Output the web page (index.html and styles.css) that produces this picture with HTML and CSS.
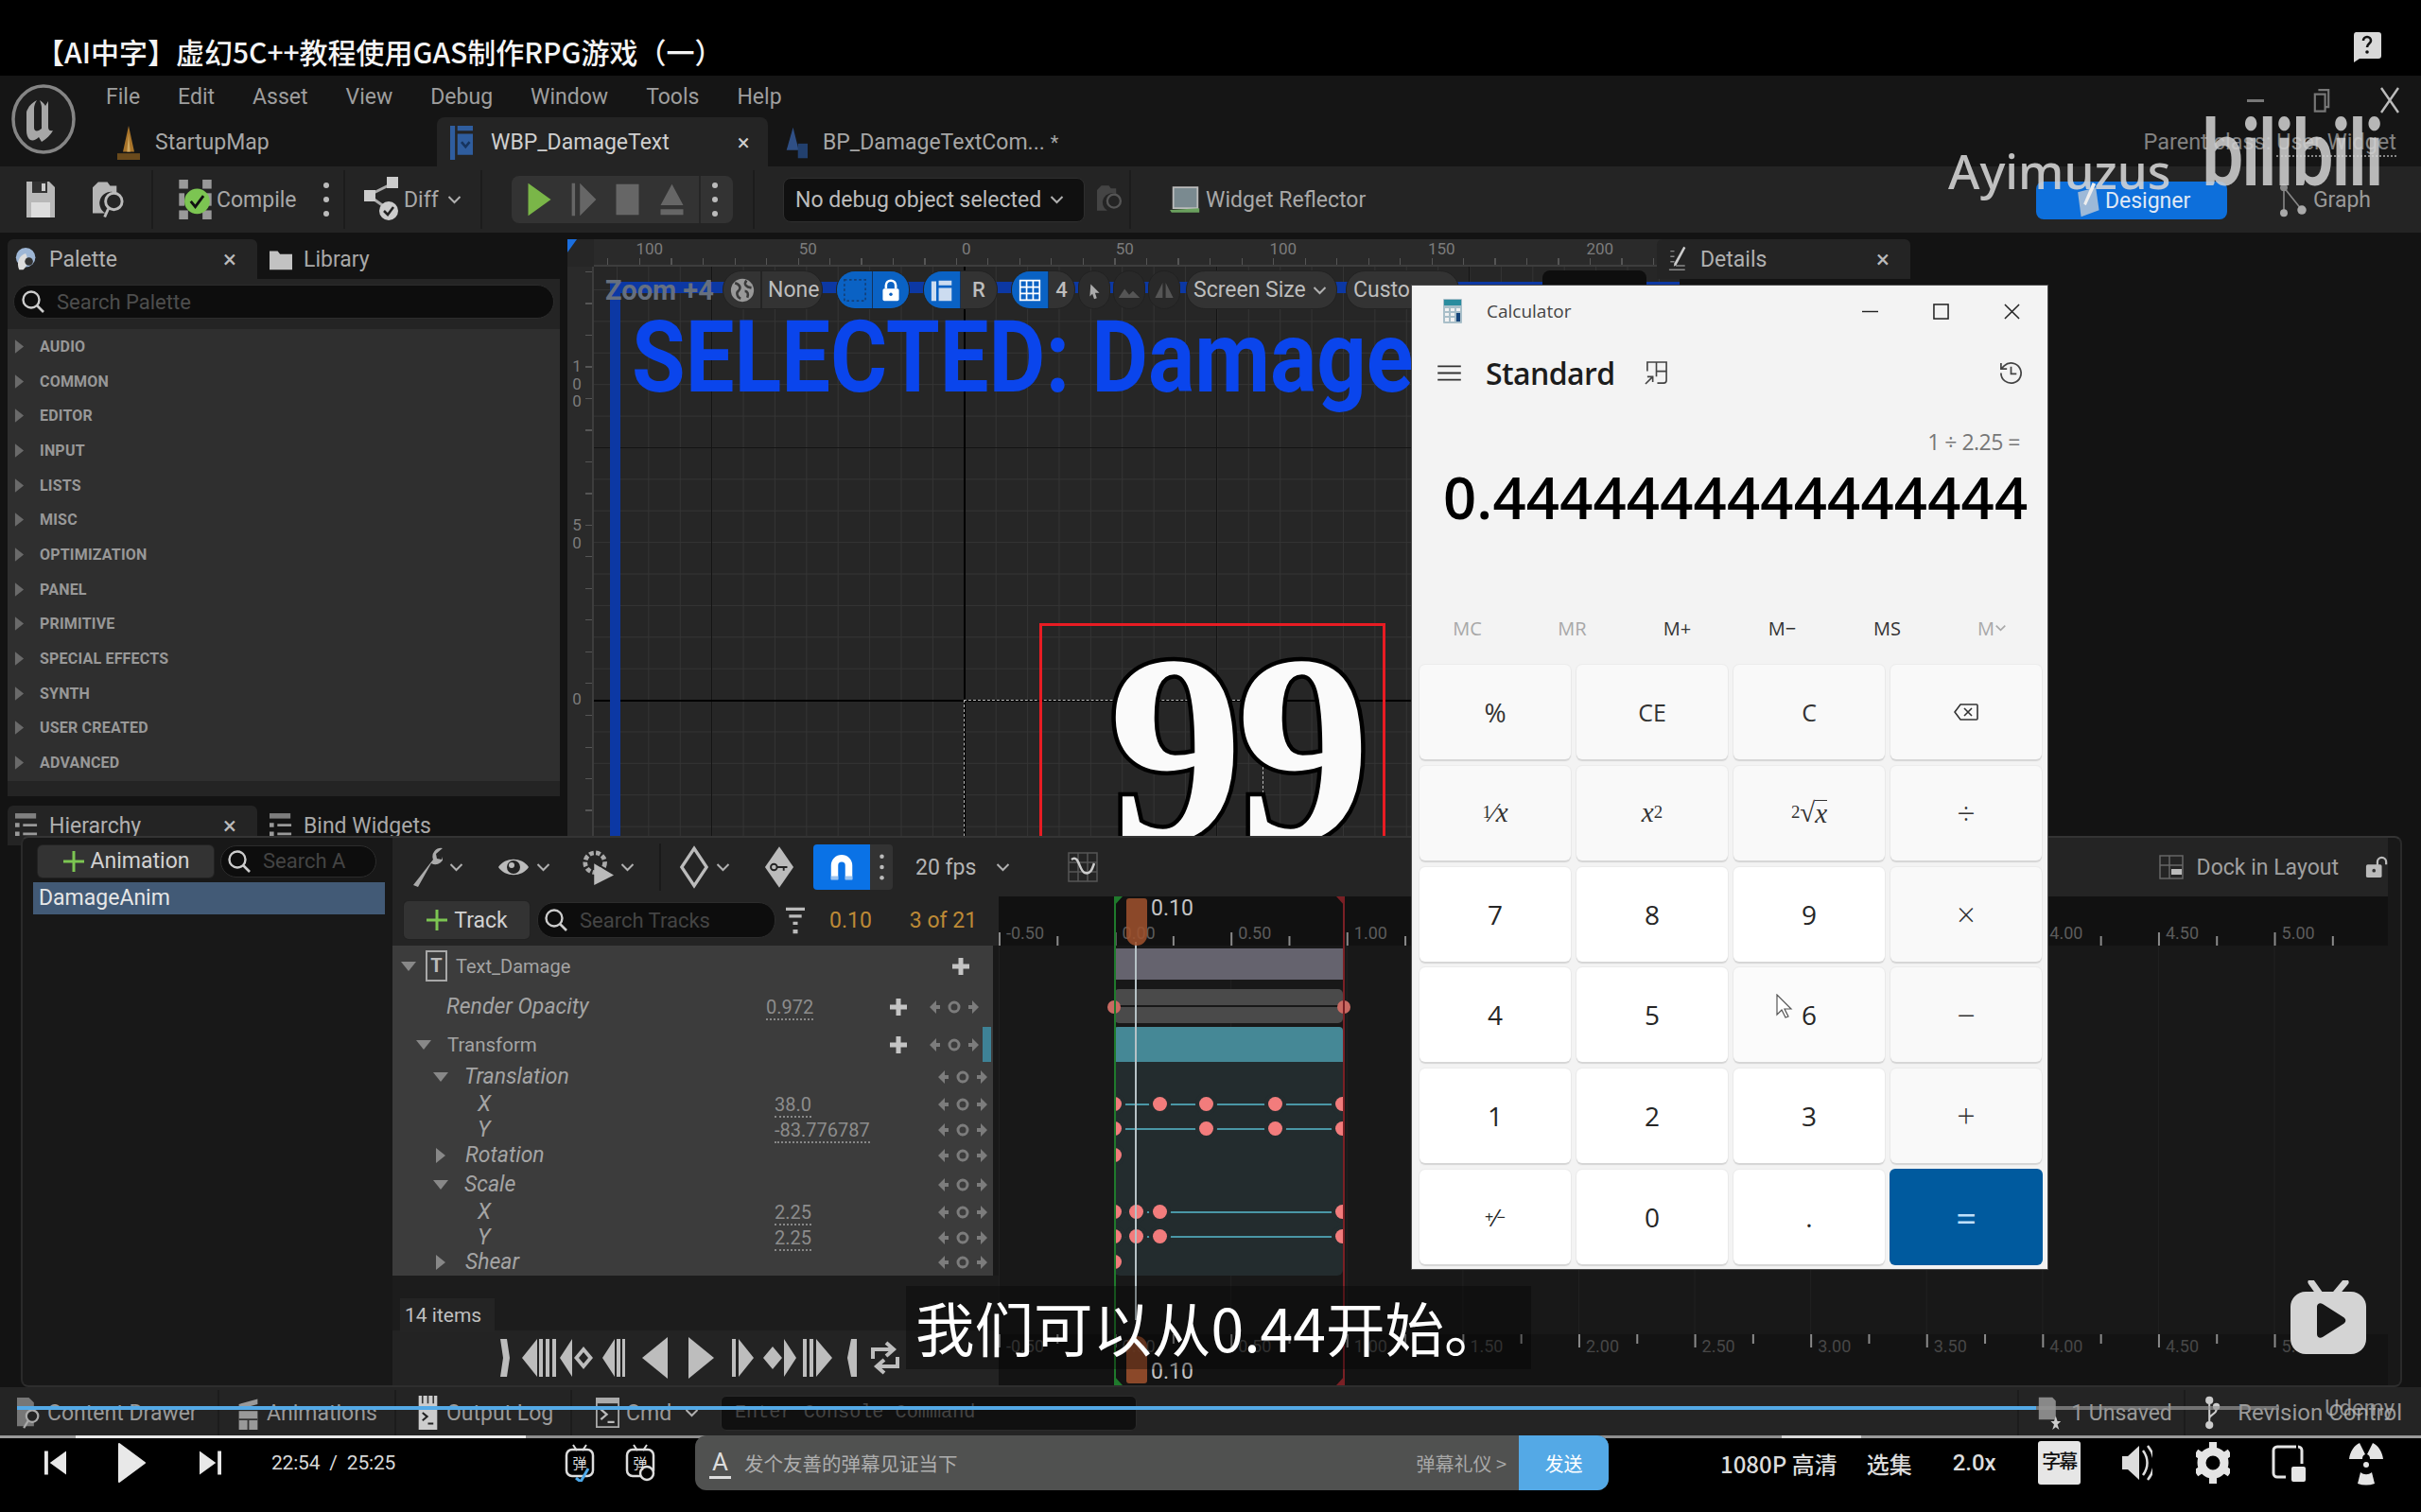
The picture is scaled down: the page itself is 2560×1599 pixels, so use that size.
FILE: index.html
```html
<!DOCTYPE html>
<html lang="zh">
<head>
<meta charset="utf-8">
<title>虚幻5C++教程</title>
<link rel="stylesheet" href="styles.css">
</head>
<body>
<svg class="defs" aria-hidden="true">
  <defs>
    <symbol id="chev" viewBox="0 0 16 10"><path d="M2 2l6 6 6-6" fill="none" stroke="currentColor" stroke-width="2"/></symbol>
    <symbol id="mag" viewBox="0 0 26 26"><circle cx="11" cy="11" r="8.5" fill="none" stroke="currentColor" stroke-width="2.4"/><path d="M17 17l7 7" stroke="currentColor" stroke-width="2.6"/></symbol>
    <symbol id="plus" viewBox="0 0 24 24"><path d="M12 1v22M1 12h22" stroke="currentColor" stroke-width="3"/></symbol>
    <symbol id="bplus" viewBox="0 0 20 20"><path d="M10 1v18M1 10h18" stroke="currentColor" stroke-width="5"/></symbol>
    <symbol id="dots" viewBox="0 0 8 40"><circle cx="4" cy="5" r="3" fill="currentColor"/><circle cx="4" cy="20" r="3" fill="currentColor"/><circle cx="4" cy="35" r="3" fill="currentColor"/></symbol>
    <symbol id="tri-r" viewBox="0 0 12 16"><path d="M1 0l10 8-10 8z" fill="currentColor"/></symbol>
    <symbol id="tri-d" viewBox="0 0 16 12"><path d="M0 1h16l-8 10z" fill="currentColor"/></symbol>
    <symbol id="keyarrows" viewBox="0 0 54 16"><path d="M8 1L1 8l7 7V10h4V6H8zM46 1l7 7-7 7V10h-4V6h4z" fill="currentColor"/><circle cx="27" cy="8" r="5" fill="none" stroke="currentColor" stroke-width="3"/></symbol>
    <symbol id="list" viewBox="0 0 26 28"><path d="M0 0h24v6H0z" fill="currentColor" opacity=".8"/><path d="M0 11h5v5H0zM0 21h5v5H0zM9 12h16v3H9zM9 22h16v3H9z" fill="currentColor"/></symbol>
  </defs>
</svg>

<div class="app">
  <header class="titlebar">
    <h1 class="title">【AI中字】虚幻5C++教程使用GAS制作RPG游戏（一）</h1>
    <svg class="help" viewBox="0 0 30 32"><path d="M3 0h24a3 3 0 013 3v22a3 3 0 01-3 3H7l-6 4V3a3 3 0 012-3z" fill="#d9d9d9"/><path d="M11 9a4 4 0 118 0c0 3-4 3-4 7" fill="none" stroke="#111" stroke-width="2.6"/><circle cx="15" cy="21" r="1.8" fill="#111"/></svg>
  </header>

  <div class="editor">
    <div class="head">
      <div class="logo-cell">
        <svg class="ue-logo" viewBox="0 0 70 74"><ellipse cx="35" cy="37" rx="32" ry="35" fill="#1e1e1e" stroke="#858585" stroke-width="3.5"/><path d="M18 27c2-5 6-8 10-10-2 3-3 6-3 9v20c0 3 2 4 5 3l3-2V25c0-3-1-5-2-8 3 2 5 4 6 6l3-5v27c0 3 1 5 5 4-2 4-7 9-12 12l-3-5c-3 3-6 4-9 3-3-2-4-6-4-10V31c0-1 0-3 1-4z" fill="#a6a6a6"/></svg>
      </div>
      <div class="head-rows">
        <div class="menu">
          <span>File</span><span>Edit</span><span>Asset</span><span>View</span><span>Debug</span><span>Window</span><span>Tools</span><span>Help</span>
          <div class="winctl">
            <svg viewBox="0 0 18 4" class="wc-min"><rect width="18" height="3" y="1" fill="#777"/></svg>
            <svg viewBox="0 0 20 28" class="wc-res"><path d="M6 2h12v20h-4M2 7h12v20H2z" fill="none" stroke="#777" stroke-width="2.4"/></svg>
            <svg viewBox="0 0 22 28" class="wc-x"><path d="M2 1l18 26M20 1L2 27" stroke="#bbb" stroke-width="2.4"/></svg>
          </div>
        </div>
        <div class="tabs">
          <div class="tab tab-map">
            <svg viewBox="0 0 28 42" class="tab-ico"><path d="M14 0l7 32H7z" fill="#a8742a"/><path d="M0 34h28v8H0z" fill="#6a4a1c"/><path d="M14 10l2 22h-4z" fill="#d0a860"/></svg>
            <span>StartupMap</span>
          </div>
          <div class="tab tab-active">
            <svg viewBox="0 0 28 42" class="tab-ico"><path d="M0 0h6v42H0zM9 0h19v6H9zM9 10h19v26H9z" fill="#2f5d9e"/><path d="M14 20l5 6 5-6" fill="none" stroke="#16345e" stroke-width="3"/></svg>
            <span>WBP_DamageText</span>
            <span class="tab-x">×</span>
          </div>
          <div class="tab tab-bp">
            <svg viewBox="0 0 28 42" class="tab-ico"><path d="M10 2l7 28H2z" fill="#2f4f85"/><path d="M16 22h12v18H16z" fill="#22406e"/></svg>
            <span>BP_DamageTextCom...</span><span class="tab-star">*</span>
          </div>
          <div class="parent">Parent class: <span class="dotted">User Widget</span></div>
        </div>
      </div>
    </div>

    <div class="toolbar">
      <div class="tb g1">
        <svg class="i30" viewBox="0 0 30 38"><path d="M0 0h24l6 6v32H0z" fill="#b8b8b8"/><path d="M6 0h16v12H6z" fill="#333"/><path d="M16 2h4v8h-4z" fill="#ccc"/><path d="M5 22h20v16H5z" fill="#ddd"/></svg>
        <svg class="i35" viewBox="0 0 36 42"><path d="M0 8l6-6h10l3 4h7v8a12 12 0 00-12 22H0z" fill="#b5b5b5"/><circle cx="23" cy="23" r="9" fill="none" stroke="#bbb" stroke-width="3"/><path d="M17 31l-4 9" stroke="#bbb" stroke-width="3"/></svg>
      </div>
      <div class="tb g2">
        <svg class="i35" viewBox="0 0 36 44"><g fill="#999"><rect x="0" width="10" height="10"/><rect x="26" width="10" height="10"/><rect x="0" y="34" width="10" height="10"/><rect x="26" y="34" width="10" height="10"/><rect y="15" width="6" height="14"/><rect x="30" y="15" width="6" height="14"/></g><circle cx="20" cy="24" r="14" fill="#7cc552"/><path d="M13 24l5 6 9-12" fill="none" stroke="#111" stroke-width="3"/></svg>
        <span>Compile</span>
        <svg class="dots" ><use href="#dots"/></svg>
      </div>
      <div class="tb g3">
        <svg class="i40" viewBox="0 0 40 48"><path d="M8 18L28 8M8 22l14 10" stroke="#aaa" stroke-width="3"/><rect y="14" width="12" height="12" fill="#ccc"/><rect x="24" width="12" height="12" fill="#ccc"/><circle cx="26" cy="36" r="10" fill="#ccc"/><path d="M21 36l4 4 6-8" fill="none" stroke="#222" stroke-width="2.5"/></svg>
        <span>Diff</span>
        <svg class="chev"><use href="#chev"/></svg>
      </div>
      <div class="tb g4">
        <div class="play-pill">
          <svg class="pp" viewBox="0 0 30 42"><path d="M1 1l28 20L1 41z" fill="#7ab648"/></svg>
          <svg class="pp" viewBox="0 0 30 42"><path d="M0 1h4v40H0zM10 1l20 20-20 20z" fill="#666"/></svg>
          <svg class="pp" viewBox="0 0 30 42"><rect x="1" y="2" width="28" height="38" fill="#666"/></svg>
          <svg class="pp" viewBox="0 0 30 42"><path d="M15 2l14 26H1zM1 33h28v7H1z" fill="#666"/></svg>
          <span class="pp-sep"></span>
          <svg class="dots"><use href="#dots"/></svg>
        </div>
      </div>
      <div class="tb g5">
        <div class="debug-select"><span>No debug object selected</span><svg class="chev"><use href="#chev"/></svg></div>
        <svg class="i28" viewBox="0 0 36 42"><path d="M0 8l6-6h10l3 4h7v8a12 12 0 00-12 22H0z" fill="#444"/><circle cx="23" cy="23" r="9" fill="none" stroke="#555" stroke-width="3"/></svg>
      </div>
      <div class="tb g6">
        <svg class="i33" viewBox="0 0 36 32"><path d="M4 2h28v24H4z" fill="#7a8a90" stroke="#bbb" stroke-width="2"/><path d="M0 28l34-2v5H2z" fill="#6aa05e"/></svg>
        <span>Widget Reflector</span>
      </div>
      <div class="tb-right">
        <div class="designer">
          <svg class="i33" viewBox="0 0 36 44"><path d="M6 12l22-6 4 28-22 8z" fill="#9db9d8"/><path d="M24 0l4 2-12 26-3-2z" fill="#eee"/></svg>
          <span>Designer</span>
        </div>
        <div class="graph">
          <svg class="i33" viewBox="0 0 36 48"><path d="M6 8l24 30M6 8v34" stroke="#888" stroke-width="2"/><circle cx="6" cy="8" r="5" fill="#888"/><circle cx="30" cy="38" r="6" fill="#aaa"/><circle cx="6" cy="42" r="5" fill="#aaa"/></svg>
          <span>Graph</span>
        </div>
      </div>
    </div>

    <div class="workspace">
      <div class="left-col">
        <div class="dock-tabs">
          <div class="dock-tab">
            <svg class="tab-ico24" viewBox="0 0 28 30"><circle cx="13" cy="13" r="12" fill="#9eb7d6"/><path d="M5 28c-4-8 0-18 8-20 4 8 2 16-3 20z" fill="#ddd"/><circle cx="17" cy="18" r="5" fill="#333"/></svg>
            <span>Palette</span><span class="dock-x">×</span>
          </div>
          <div class="dock-link">
            <svg class="tab-ico24" viewBox="0 0 28 26"><path d="M0 3h10l3 4h15v19H0z" fill="#c2c2c2"/></svg>
            <span>Library</span>
          </div>
        </div>
        <div class="panel">
          <div class="search-row">
            <div class="search">
              <svg class="mag"><use href="#mag"/></svg><span>Search Palette</span>
            </div>
          </div>
          <ul class="cat-list">
            <li><svg class="caret"><use href="#tri-r"/></svg>AUDIO</li>
            <li><svg class="caret"><use href="#tri-r"/></svg>COMMON</li>
            <li><svg class="caret"><use href="#tri-r"/></svg>EDITOR</li>
            <li><svg class="caret"><use href="#tri-r"/></svg>INPUT</li>
            <li><svg class="caret"><use href="#tri-r"/></svg>LISTS</li>
            <li><svg class="caret"><use href="#tri-r"/></svg>MISC</li>
            <li><svg class="caret"><use href="#tri-r"/></svg>OPTIMIZATION</li>
            <li><svg class="caret"><use href="#tri-r"/></svg>PANEL</li>
            <li><svg class="caret"><use href="#tri-r"/></svg>PRIMITIVE</li>
            <li><svg class="caret"><use href="#tri-r"/></svg>SPECIAL EFFECTS</li>
            <li><svg class="caret"><use href="#tri-r"/></svg>SYNTH</li>
            <li><svg class="caret"><use href="#tri-r"/></svg>USER CREATED</li>
            <li><svg class="caret"><use href="#tri-r"/></svg>ADVANCED</li>
          </ul>
        </div>
        <div class="dock-tabs dock-lower">
          <div class="dock-tab">
            <svg class="tab-ico24"><use href="#list"/></svg>
            <span>Hierarchy</span><span class="dock-x">×</span>
          </div>
          <div class="dock-link">
            <svg class="tab-ico24"><use href="#list"/></svg>
            <span>Bind Widgets</span>
          </div>
        </div>
      </div>

      <div class="designer-view">
        <div class="corner"></div>
        <div class="ruler-top">
          <span>100</span><span>50</span><span>0</span><span>50</span><span>100</span><span>150</span><span>200</span>
        </div>
        <div class="ruler-left">
          <span class="rl-100">1<br>0<br>0</span>
          <span class="rl-50">5<br>0</span>
          <span class="rl-0">0</span>
        </div>
        <div class="canvas">
          <div class="outline-h"></div>
          <div class="outline-v"></div>
          <div class="selected">SELECTED: Damage</div>
          <div class="dash"></div>
          <div class="nines">99</div>
          <div class="redbox"></div>
          <div class="cv-bar">
            <span class="zoom-txt">Zoom +4</span>
            <div class="pill pill-none">
              <svg class="globe" viewBox="0 0 30 30"><circle cx="15" cy="15" r="14" fill="#999"/><path d="M6 6c6 2 8 6 4 10-3 2-1 8 3 9M20 3c-4 5 0 8 6 9M18 16c3 0 5 3 3 8" fill="none" stroke="#3a3a3a" stroke-width="3"/></svg>
              <span class="pill-div"></span><span>None</span>
            </div>
            <div class="pill pill-select">
              <span class="blue-seg seg-wide"><svg class="sq" viewBox="0 0 28 28"><rect x="1" y="1" width="26" height="26" fill="none" stroke="#13407a" stroke-width="2" stroke-dasharray="3 3"/></svg></span>
              <span class="blue-seg seg-lock"><svg class="sq" viewBox="0 0 24 28"><path d="M6 12V8a6 6 0 0112 0v4" fill="none" stroke="#fff" stroke-width="3"/><rect x="2" y="12" width="20" height="15" rx="2" fill="#fff"/><circle cx="12" cy="19" r="2" fill="#0a5fc0"/></svg></span>
            </div>
            <div class="pill pill-r">
              <span class="blue-seg seg-wide"><svg class="sq" viewBox="0 0 28 28"><path d="M1 3h6v24H1zM10 2h16v6H10zM10 11h16v16H10z" fill="#ccdcf0"/></svg></span>
              <span class="pill-lbl">R</span>
            </div>
            <div class="pill pill-grid">
              <span class="blue-seg seg-wide"><svg class="sq" viewBox="0 0 28 28"><path d="M2 2h24v24H2zM10 2v24M18 2v24M2 10h24M2 18h24" fill="none" stroke="#fff" stroke-width="2"/></svg></span>
              <span class="pill-lbl">4</span>
            </div>
            <div class="pill pill-ic"><svg class="sq" viewBox="0 0 20 26"><path d="M6 6l10 10h-5l2 6-3 1-2-6-3 3z" fill="#aaa"/></svg></div>
            <div class="pill pill-ic pill-dim"><svg class="sq" viewBox="0 0 30 24"><path d="M1 2h28v20H1z" fill="none"/><path d="M1 22l8-12 6 8 5-5 9 9z" fill="#555"/></svg></div>
            <div class="pill pill-ic pill-dim"><svg class="sq" viewBox="0 0 30 24"><path d="M13 2L3 22h10zM17 2l10 20H17z" fill="#555"/></svg></div>
            <div class="pill pill-size"><span>Screen Size</span><svg class="chev"><use href="#chev"/></svg></div>
            <div class="pill pill-custom"><span>Custom</span></div>
            <div class="width-box"></div>
          </div>
        </div>
      </div>

      <div class="right-col">
        <div class="dock-tab details-tab">
          <svg class="tab-ico24" viewBox="0 0 26 40"><path d="M2 8h6M2 16h6M2 24h6M0 36h24M10 30h14" stroke="#888" stroke-width="2"/><path d="M22 1l3 2-14 26-4 2 1-5z" fill="#ccc"/></svg>
          <span>Details</span><span class="dock-x">×</span>
        </div>
        <div class="details-body"></div>
      </div>

      <!-- docked animation drawer, lies over the workspace -->
      <section class="drawer">
        <div class="anim-list">
          <div class="anim-top">
            <button class="ue-btn btn-anim"><svg class="plus"><use href="#plus"/></svg><span>Animation</span></button>
            <div class="search search-a"><svg class="mag"><use href="#mag"/></svg><span>Search A</span></div>
          </div>
          <div class="anim-row">DamageAnim</div>
        </div>
        <div class="seq">
          <div class="seq-bar">
            <svg class="ic-wrench" viewBox="0 0 34 44"><path d="M3 41L24 14a9 9 0 0110-12l-7 6 1 5 5 1 2-6a9 9 0 01-13 10L8 43z" fill="#aaa"/></svg>
            <svg class="chev"><use href="#chev"/></svg>
            <svg class="ic-eye" viewBox="0 0 34 24"><path d="M1 12C8 1 26 1 33 12 26 23 8 23 1 12z" fill="#bbb"/><circle cx="17" cy="12" r="7" fill="#222"/><circle cx="15" cy="10" r="3" fill="#bbb"/></svg>
            <svg class="chev"><use href="#chev"/></svg>
            <svg class="ic-gear" viewBox="0 0 36 40"><circle cx="15" cy="15" r="11" fill="none" stroke="#aaa" stroke-width="5" stroke-dasharray="5 2.5"/><path d="M14 16l22 13-22 11z" fill="#bbb"/></svg>
            <svg class="chev"><use href="#chev"/></svg>
            <span class="seq-sep"></span>
            <svg class="ic-dia" viewBox="0 0 34 48"><path d="M17 3l14 21-14 21L3 24z" fill="none" stroke="#bbb" stroke-width="3.5"/></svg>
            <svg class="chev"><use href="#chev"/></svg>
            <svg class="ic-key" viewBox="0 0 34 48"><path d="M17 1l16 23-16 23L1 24z" fill="#bbb"/><circle cx="11" cy="24" r="3.5" fill="none" stroke="#222" stroke-width="2"/><path d="M14 24h12M22 24v4" stroke="#222" stroke-width="2"/></svg>
            <div class="magnet"><svg viewBox="0 0 32 36"><path d="M4 32V16a12 12 0 0124 0v16h-8V16a4 4 0 00-8 0v16z" fill="#fff"/><path d="M4 28h8v4H4zM20 28h8v4h-8z" fill="#9cc4f0"/></svg></div>
            <div class="magnet-more"><svg class="dots"><use href="#dots"/></svg></div>
            <span class="fps">20 fps</span>
            <svg class="chev"><use href="#chev"/></svg>
            <svg class="ic-curve" viewBox="0 0 32 32"><path d="M1 1h30v30H1zM1 11h30M1 21h30M11 1v30M21 1v30" fill="none" stroke="#555" stroke-width="1.5"/><path d="M4 8c8-6 8 12 14 14s8-4 10-10" fill="none" stroke="#ccc" stroke-width="2.5"/></svg>
            <div class="dock-layout">
              <svg class="ic-dock" viewBox="0 0 26 26"><path d="M1 1h24v24H1zM1 11h24M11 1v24" fill="none" stroke="#666" stroke-width="1.5"/><rect x="13" y="15" width="11" height="6" fill="#bbb"/></svg>
              <span>Dock in Layout</span>
              <svg class="ic-lock" viewBox="0 0 26 26"><path d="M14 11V7a5 5 0 0110 0v3" fill="none" stroke="#bbb" stroke-width="2.4"/><rect x="1" y="10" width="18" height="15" rx="2" fill="#bbb"/><circle cx="10" cy="17" r="2" fill="#333"/></svg>
            </div>
          </div>
          <div class="seq-main">
            <div class="tree-col">
              <div class="track-bar">
                <button class="ue-btn btn-track"><svg class="plus"><use href="#plus"/></svg><span>Track</span></button>
                <div class="search search-t"><svg class="mag"><use href="#mag"/></svg><span>Search Tracks</span></div>
                <svg class="ic-filter" viewBox="0 0 24 36"><path d="M0 2h24v4H0zM4 11h16v4H4zM9 20h6v4H9zM9 30h6v5H9z" fill="#bbb"/></svg>
                <span class="orange val1">0.10</span><span class="orange val2">3 of 21</span>
              </div>
              <div class="tree">
                <div class="trow h43 top"><div class="tn l0"><svg class="cd"><use href="#tri-d"/></svg><span class="t-ico">T</span><span class="name-sm">Text_Damage</span></div><div></div><div class="ta pad14"><svg class="bplus bp-top"><use href="#bplus"/></svg></div></div>
                <div class="trow h43"><div class="tn l1 it">Render Opacity</div><div class="tval"><span class="dotted">0.972</span></div><div class="ta pad14"><svg class="bplus"><use href="#bplus"/></svg><svg class="ka"><use href="#keyarrows"/></svg></div></div>
                <div class="trow h37"><div class="tn l1x"><svg class="cd"><use href="#tri-d"/></svg><span class="name-md">Transform</span></div><div></div><div class="ta pad14"><svg class="bplus"><use href="#bplus"/></svg><svg class="ka"><use href="#keyarrows"/></svg></div></div>
                <div class="trow h31"><div class="tn l2 it"><svg class="cd"><use href="#tri-d"/></svg>Translation</div><div></div><div class="ta"><svg class="ka"><use href="#keyarrows"/></svg></div></div>
                <div class="trow h27"><div class="tn l3 it">X</div><div class="tval tval2"><span class="dotted">38.0</span></div><div class="ta"><svg class="ka"><use href="#keyarrows"/></svg></div></div>
                <div class="trow h25"><div class="tn l3 it">Y</div><div class="tval tval2"><span class="dotted">-83.776787</span></div><div class="ta"><svg class="ka"><use href="#keyarrows"/></svg></div></div>
                <div class="trow h31"><div class="tn l2 it"><svg class="cr"><use href="#tri-r"/></svg>Rotation</div><div></div><div class="ta"><svg class="ka"><use href="#keyarrows"/></svg></div></div>
                <div class="trow h31"><div class="tn l2 it"><svg class="cd"><use href="#tri-d"/></svg>Scale</div><div></div><div class="ta"><svg class="ka"><use href="#keyarrows"/></svg></div></div>
                <div class="trow h27"><div class="tn l3 it">X</div><div class="tval tval2"><span class="dotted">2.25</span></div><div class="ta"><svg class="ka"><use href="#keyarrows"/></svg></div></div>
                <div class="trow h25"><div class="tn l3 it">Y</div><div class="tval tval2"><span class="dotted">2.25</span></div><div class="ta"><svg class="ka"><use href="#keyarrows"/></svg></div></div>
                <div class="trow h29"><div class="tn l2 it"><svg class="cr"><use href="#tri-r"/></svg>Shear</div><div></div><div class="ta"><svg class="ka"><use href="#keyarrows"/></svg></div></div>
                <span class="teal-mark"></span>
              </div>
              <div class="tree-foot">
                <span class="items">14 items</span>
                <svg class="transport" viewBox="0 0 430 50">
                  <g fill="#bdbdbd">
                    <path d="M0 5h7l3 20-3 20H0l3-20z"/>
                    <path d="M23 25l16-20v40zM41 5h4v40h-4zM48 5h4v40h-4zM55 5h4v40h-4z"/>
                    <path d="M63 25l13-20v40zM88 13l10 12-10 12-10-12zM88 19l-5 6 5 6 5-6z"/>
                    <path d="M108 25l13-20v40zM123 5h4v40h-4zM129 5h3v40h-3z"/>
                    <path d="M150 25l27-22v44z"/>
                    <path d="M199 3l27 22-27 22z"/>
                    <path d="M245 5h4v40h-4zM252 5l16 20-16 20z"/>
                    <path d="M288 13l10 12-10 12-10-12zM300 5l13 20-13 20z"/>
                    <path d="M320 5h4v40h-4zM327 5h4v40h-4zM334 5l17 20-17 20z"/>
                    <path d="M367 25l4-20h6v40h-6z"/>
                  </g>
                  <path d="M394 26V16h20m-6-7l8 7-8 7M420 24v10h-20m6 7l-8-7 8-7" fill="none" stroke="#bdbdbd" stroke-width="4"/>
                </svg>
              </div>
            </div>
            <div class="timeline">
              <div class="tl-ruler">
                <span>-0.50</span><span>0.00</span><span>0.50</span><span>1.00</span><span>1.50</span><span>2.00</span><span>2.50</span><span>3.00</span><span>3.50</span><span>4.00</span><span>4.50</span><span>5.00</span>
              </div>
              <div class="tl-tracks">
                <div class="clip-row h43"><div class="clip clip-purple"></div></div>
                <div class="clip-row h43">
                  <div class="clip clip-grey"></div>
                  <i class="key key-out key-l"></i><i class="key key-out key-r"></i>
                </div>
                <div class="clip-row h37"><div class="clip clip-teal"></div></div>
                <div class="teal-block">
                  <div class="kr h31"></div>
                  <div class="kr h27 line"><i class="key" style="left:0"></i><i class="key" style="left:48px"></i><i class="key" style="left:97px"></i><i class="key" style="left:170px"></i><i class="key" style="left:241px"></i></div>
                  <div class="kr h25 line"><i class="key" style="left:0"></i><i class="key" style="left:97px"></i><i class="key" style="left:170px"></i><i class="key" style="left:241px"></i></div>
                  <div class="kr h31"><i class="key" style="left:0"></i></div>
                  <div class="kr h31"></div>
                  <div class="kr h27 line"><i class="key" style="left:0"></i><i class="key" style="left:23px"></i><i class="key" style="left:48px"></i><i class="key" style="left:241px"></i></div>
                  <div class="kr h25 line"><i class="key" style="left:0"></i><i class="key" style="left:23px"></i><i class="key" style="left:48px"></i><i class="key" style="left:241px"></i></div>
                  <div class="kr h29"><i class="key" style="left:0"></i></div>
                </div>
              </div>
              <div class="tl-ruler tl-ruler-b">
                <span>-0.50</span><span>0.00</span><span>0.50</span><span>1.00</span><span>1.50</span><span>2.00</span><span>2.50</span><span>3.00</span><span>3.50</span><span>4.00</span><span>4.50</span><span>5.00</span>
              </div>
              <i class="range range-start"></i>
              <i class="range range-end"></i>
              <i class="playline"></i>
              <span class="head-top"></span><span class="head-lbl lbl-top">0.10</span>
              <span class="head-bot"></span><span class="head-lbl lbl-bot">0.10</span>
            </div>
          </div>
        </div>
      </section>
    </div>

    <div class="status">
      <div class="st st1"><svg class="st-ico" viewBox="0 0 28 40"><path d="M0 2h14l6 6v28H0z" fill="#777"/><circle cx="18" cy="24" r="7" fill="#242424" stroke="#aaa" stroke-width="2.5"/><path d="M13 30l-5 8" stroke="#aaa" stroke-width="2.5"/></svg><span>Content Drawer</span></div>
      <div class="st st2"><svg class="st-ico" viewBox="0 0 26 40"><path d="M2 10L24 4v6L2 16z" fill="#999"/><path d="M2 18h22v22H2z" fill="#999"/><path d="M2 28h22M13 28v12" stroke="#333" stroke-width="2"/></svg><span>Animations</span></div>
      <div class="st st3"><svg class="st-ico" viewBox="0 0 24 44"><path d="M0 0h24v44H0z" fill="#ccc"/><path d="M5 0v10M12 0v10M19 0v10" stroke="#333" stroke-width="2"/><path d="M5 22l6 5-6 5M12 36h7" fill="none" stroke="#222" stroke-width="2.5"/></svg><span>Output Log</span></div>
      <div class="st st4"><svg class="st-ico" viewBox="0 0 28 36"><path d="M1 1h26v34H1z" fill="none" stroke="#aaa" stroke-width="2"/><path d="M1 1h26v6H1z" fill="#aaa"/><path d="M6 14l7 6-7 6M14 29h8" fill="none" stroke="#bbb" stroke-width="2.5"/></svg><span>Cmd</span><svg class="chev"><use href="#chev"/></svg></div>
      <div class="console"><span>Enter Console Command</span></div>
      <div class="st st-r1"><svg class="st-ico" viewBox="0 0 26 40"><path d="M0 2h16l4 4v22H0z" fill="#888"/><path d="M20 24l2 6h4l-4 4 2 6-4-3-4 3 2-6-4-4h4z" fill="#ccc"/></svg><span>1 Unsaved</span></div>
      <div class="st st-r2"><svg class="st-ico" viewBox="0 0 20 44"><circle cx="6" cy="6" r="5" fill="#ccc"/><circle cx="6" cy="38" r="5" fill="#ccc"/><circle cx="15" cy="14" r="4.5" fill="#ccc"/><path d="M6 10v24M15 18c0 6-9 6-9 12" fill="none" stroke="#ccc" stroke-width="2.5"/></svg><span>Revision Control</span></div>
    </div>
  </div>

  <div class="player">
    <div class="seekline"></div>
    <div class="player-row">
      <svg class="p-prev" viewBox="0 0 24 26"><path d="M0 0h4v26H0zM24 0v26L6 13z" fill="#e8e8e8"/></svg>
      <svg class="p-play" viewBox="0 0 30 42"><path d="M2 1l27 20L2 41z" fill="#e8e8e8" stroke="#e8e8e8" stroke-width="2" stroke-linejoin="round"/></svg>
      <svg class="p-next" viewBox="0 0 24 26"><path d="M24 0h-4v26h4zM0 0v26l18-13z" fill="#e8e8e8"/></svg>
      <span class="p-time">22:54&nbsp; /&nbsp; 25:25</span>
      <svg class="p-dm1" viewBox="0 0 32 40"><path d="M9 1l4 6M23 1l-4 6" stroke="#ddd" stroke-width="2"/><rect x="2" y="6" width="28" height="28" rx="6" fill="none" stroke="#ddd" stroke-width="2.5"/><path d="M12 36l5 4 8-14" fill="none" stroke="#4ea8e8" stroke-width="3"/></svg>
      <span class="dm-glyph dm-g1">弹</span>
      <svg class="p-dm2" viewBox="0 0 32 40"><path d="M9 1l4 6M23 1l-4 6" stroke="#ddd" stroke-width="2"/><rect x="2" y="6" width="28" height="28" rx="6" fill="none" stroke="#ddd" stroke-width="2.5"/><circle cx="23" cy="31" r="7" fill="#000" stroke="#ddd" stroke-width="2.5"/></svg>
      <span class="dm-glyph dm-g2">弹</span>
      <div class="dm-input">
        <span class="dm-a">A</span>
        <span class="dm-ph">发个友善的弹幕见证当下</span>
        <span class="dm-rule">弹幕礼仪 <b>&gt;</b></span>
        <button class="dm-send">发送</button>
      </div>
      <span class="p-txt q">1080P 高清</span>
      <span class="p-txt ep">选集</span>
      <span class="p-txt sp">2.0x</span>
      <span class="cc">字幕</span>
      <svg class="p-vol" viewBox="0 0 32 42"><path d="M0 14h6L18 3v36L6 28H0z" fill="#ddd"/><path d="M22 8c6 8 6 18 0 26M27 3c9 11 9 25 0 36" fill="none" stroke="#ddd" stroke-width="2.5"/></svg>
      <svg class="p-gear" viewBox="0 0 36 44"><circle cx="18" cy="22" r="12" fill="none" stroke="#e4e4e4" stroke-width="9"/><path d="M18 0v7M18 37v7M0 11l6 4M30 29l6 4M0 33l6-4M30 15l6-4" stroke="#e4e4e4" stroke-width="8"/></svg>
      <svg class="p-pip" viewBox="0 0 36 40"><path d="M26 3H6a4 4 0 00-4 4v24a4 4 0 004 4h9M32 21V7a4 4 0 00-4-4" fill="none" stroke="#e4e4e4" stroke-width="3"/><rect x="21" y="24" width="15" height="16" rx="2" fill="#e4e4e4"/></svg>
      <svg class="p-rad" viewBox="0 0 38 48"><path d="M12 3c-6 3-10 9-11 17h14c0-3 1-4 3-5zM26 3c6 3 10 9 11 17H23c0-3-1-4-3-5z" fill="#e4e4e4"/><circle cx="19" cy="26" r="3" fill="#e4e4e4"/><path d="M13 34c4 3 8 3 12 0l3 12c-6 2-12 2-18 0z" fill="#e4e4e4"/></svg>
    </div>
  </div>

  <!-- everything below lies over the video frame -->
  <div class="calc">
    <div class="calc-title">
      <svg class="calc-ico" viewBox="0 0 20 26"><rect width="20" height="26" rx="1" fill="#a9bfc9"/><rect x="1" y="1" width="18" height="6" fill="#2a8c9e"/><path d="M2 10h4v3H2zM8 10h4v3H8zM14 10h4v3h-4zM2 15h4v3H2zM8 15h4v3H8zM2 20h4v4H2zM8 20h4v4H8z" fill="#f2f2f2"/><rect x="14" y="15" width="4" height="9" fill="#17457a"/></svg>
      <span class="calc-name">Calculator</span>
      <div class="calc-ctl">
        <svg viewBox="0 0 18 18"><path d="M0 9h18" stroke="#222" stroke-width="1.5"/></svg>
        <svg viewBox="0 0 18 18"><rect x="1" y="1" width="16" height="16" fill="none" stroke="#222" stroke-width="1.6"/></svg>
        <svg viewBox="0 0 18 18"><path d="M1 1l16 16M17 1L1 17" stroke="#222" stroke-width="1.6"/></svg>
      </div>
    </div>
    <div class="calc-head">
      <svg class="burger" viewBox="0 0 26 18"><path d="M0 1.5h26M0 9h26M0 16.5h26" stroke="#333" stroke-width="2"/></svg>
      <span class="calc-mode">Standard</span>
      <svg class="keeptop" viewBox="0 0 26 26"><path d="M3 11V1h10v10h11V1H13M24 11v10a3 3 0 01-3 3h-7M13 11v6" fill="none" stroke="#444" stroke-width="1.7"/><path d="M1 25l8-8M3 17h6v6" fill="none" stroke="#444" stroke-width="1.7"/></svg>
      <svg class="history" viewBox="0 0 28 28"><path d="M3 14a11 11 0 103.5-8L3 9.5M3 3v6.5h6.5" fill="none" stroke="#444" stroke-width="1.8"/><path d="M14 7v8h6" fill="none" stroke="#444" stroke-width="1.8"/></svg>
    </div>
    <div class="calc-expr">1 ÷ 2.25 =</div>
    <div class="calc-val">0.4444444444444444</div>
    <div class="calc-mem">
      <span class="off">MC</span><span class="off">MR</span><span>M+</span><span>M−</span><span>MS</span><span class="off mv">M<svg class="mchev"><use href="#chev"/></svg></span>
    </div>
    <div class="keypad">
      <button class="fn">%</button><button class="fn sm">CE</button><button class="fn sm">C</button>
      <button class="fn"><svg class="bksp" viewBox="0 0 26 18"><path d="M7 1h17a1 1 0 011 1v14a1 1 0 01-1 1H7l-6-8z" fill="none" stroke="#333" stroke-width="1.6"/><path d="M11 5l8 8M19 5l-8 8" stroke="#333" stroke-width="1.6"/></svg></button>
      <button class="fn ser"><sup>1</sup>⁄<i>x</i></button><button class="fn ser"><i>x</i><sup>2</sup></button><button class="fn ser"><sup>2</sup>√<i class="ol">x</i></button><button class="fn op">÷</button>
      <button>7</button><button>8</button><button>9</button><button class="fn op">×</button>
      <button>4</button><button>5</button><button class="hov">6<svg class="cursor" viewBox="0 0 18 26"><path d="M1 1v21l5-5 4 8 3-1-4-8h7z" fill="#fff" stroke="#555" stroke-width="1.2"/></svg></button><button class="fn op">−</button>
      <button>1</button><button>2</button><button>3</button><button class="fn op">+</button>
      <button class="ser-s"><sup>+</sup>⁄<sub>−</sub></button><button>0</button><button>.</button><button class="eq">=</button>
    </div>
  </div>

  <div class="subtitle">我们可以从0.44开始。</div>
  <div class="wm-name">Ayimuzus</div>
  <div class="wm-bili">bilibili</div>
  <div class="wm-udemy">Udemy</div>
  <div class="progress"><i class="prog-fill"></i><i class="prog-buf"></i></div>
  <svg class="bili-tv" viewBox="0 0 80 78"><path d="M22 2l10 14M58 2L48 14" stroke="#d4d4d4" stroke-width="7" stroke-linecap="round"/><rect y="12" width="80" height="66" rx="16" fill="#d4d4d4"/><path d="M28 28c0-3 3-5 6-3l22 14c3 2 3 5 0 7L34 60c-3 2-6 0-6-3z" fill="#161616"/></svg>
</div>
</body>
</html>
```

FILE: styles.css
```css
* { box-sizing: border-box; }
html, body { margin: 0; padding: 0; background: #000; }
.defs { position: absolute; width: 0; height: 0; }
button { font: inherit; border: 0; padding: 0; }
ul { margin: 0; padding: 0; list-style: none; }
svg { display: block; flex: none; }

.app {
  position: relative; width: 2560px; height: 1599px; overflow: hidden;
  display: flex; flex-direction: column;
  font-family: Roboto, "Noto Sans", sans-serif; font-size: 23px; color: #a8a8a8;
}

/* page title */
.titlebar { height: 80px; background: #000; display: flex; align-items: center; padding: 0 42px 0 38px; justify-content: space-between; flex: none; }
.title { margin: 28px 0 0; font: 500 30px/1 "Noto Sans CJK SC", sans-serif; color: #f4f4f4; }
.help { width: 30px; height: 32px; margin-top: 20px; }

/* editor */
.editor { display: flex; flex-direction: column; flex: none; height: 1438px; }
.head { display: flex; height: 96px; background: #151515; flex: none; }
.logo-cell { width: 112px; padding: 9px 0 0 11px; flex: none; }
.ue-logo { width: 70px; height: 74px; }
.head-rows { flex: 1; display: flex; flex-direction: column; }
.menu { height: 44px; display: flex; align-items: center; gap: 40px; color: #9e9e9e; }
.winctl { margin-left: auto; display: flex; align-items: center; gap: 52px; padding: 8px 22px 0 0; }
.wc-min { width: 18px; height: 4px; }
.wc-res { width: 18px; height: 26px; }
.wc-x { width: 22px; height: 28px; }
.tabs { height: 52px; display: flex; align-items: stretch; }
.tab { display: flex; align-items: center; width: 350px; color: #a6a6a6; flex: none; position: relative; padding-top: 1px; }
.tab-map { padding-left: 10px; gap: 14px; }
.tab-active { background: #242424; border-radius: 8px 8px 0 0; padding-left: 12px; gap: 17px; color: #cfcfcf; }
.tab-bp { padding-left: 16px; gap: 14px; width: 400px; }
.tab-x { margin-left: 55px; font-size: 24px; }
.tab-star { margin-left: -8px; font-size: 20px; }
.tab-ico { width: 28px; height: 36px; }
.parent { margin-left: auto; padding-right: 26px; align-self: center; color: #828282; font-size: 23.5px; }
.dotted { border-bottom: 2px dotted #888; }

.toolbar { height: 70px; background: #242424; display: flex; align-items: center; flex: none; color: #a8a8a8; }
.tb { display: flex; align-items: center; height: 62px; border-right: 2px solid #1c1c1c; flex: none; }
.g1 { width: 162px; padding-left: 28px; gap: 40px; }
.g2 { width: 203px; padding-left: 27px; gap: 5px; }
.g3 { width: 145px; padding-left: 20px; gap: 2px; }
.g4 { width: 288px; padding-left: 31px; }
.g5 { width: 398px; padding-left: 30px; gap: 13px; }
.g6 { padding-left: 41px; gap: 5px; border: 0; }
.i30 { width: 30px; height: 38px; }
.i35 { width: 35px; height: 42px; }
.i40 { width: 40px; height: 48px; }
.i28 { width: 28px; height: 36px; }
.i33 { width: 33px; height: 38px; }
.dots { width: 8px; height: 40px; color: #bbb; }
.g2 .dots { margin-left: 22px; }
.chev { width: 17px; height: 10px; color: #b0b0b0; margin-left: 6px; }
.play-pill { display: flex; align-items: center; width: 234px; height: 50px; background: #333; border-radius: 8px; padding-left: 15px; gap: 17.5px; }
.pp { width: 29px; height: 36px; }
.pp-sep { width: 2px; height: 50px; background: #262626; margin-left: -3px; }
.play-pill .dots { margin-left: -7px; }
.debug-select { width: 319px; height: 47px; background: #101010; border: 1px solid #2e2e2e; border-radius: 8px; display: flex; align-items: center; padding-left: 12px; color: #bcbcbc; font-size: 23px; white-space: nowrap; }
.debug-select .chev { margin-left: 8px; }
.tb-right { margin-left: auto; display: flex; align-items: center; padding-right: 53px; }
.designer { width: 202px; height: 40px; margin-top: 2px; background: #0d6fdb; border-radius: 8px; display: flex; align-items: center; padding-left: 38px; gap: 2px; color: #e0e9f5; }
.graph { display: flex; align-items: center; padding-left: 53px; gap: 5px; color: #999; }

/* workspace */
.workspace { position: relative; height: 1221px; background: #131313; display: flex; flex: none; padding-top: 7px; align-items: flex-start; }
.left-col { width: 600px; flex: none; padding-left: 8px; display: flex; flex-direction: column; }
.dock-tabs { display: flex; align-items: stretch; height: 42px; }
.dock-tab { display: flex; align-items: center; width: 264px; padding-left: 8px; gap: 12px; background: #242424; border-radius: 6px 6px 0 0; color: #b0b0b0; position: relative; }
.dock-link { display: flex; align-items: center; padding-left: 13px; gap: 12px; color: #a8a8a8; }
.tab-ico24 { width: 24px; height: 28px; color: #999; }
.dock-x { position: absolute; right: 22px; top: 50%; transform: translateY(-50%); font-size: 26px; color: #bbb; }
.panel { width: 584px; height: 547px; background: #242424; flex: none; }
.search-row { height: 53px; padding: 6px 6px; }
.search { display: flex; align-items: center; height: 36px; border-radius: 18px; background: #0d0d0d; border: 1px solid #2c2c2c; color: #4d4d4d; font-size: 22px; padding-left: 7px; gap: 12px; overflow: hidden; }
.mag { width: 26px; height: 26px; color: #ccc; }
.cat-list { background: #2f2f2f; height: 478px; }
.cat-list li { height: 36.7px; display: flex; align-items: center; padding-left: 7px; gap: 16px; font-weight: 700; font-size: 16px; color: #989898; letter-spacing: 0.2px; }
.caret { width: 11px; height: 15px; color: #6a6a6a; }
.dock-lower { margin-top: 10px; }
.dock-lower .tab-ico24 { height: 26px; }

.designer-view { position: relative; width: 1145px; height: 631px; display: grid; grid-template-columns: 28px 1fr; grid-template-rows: 29px 1fr; background: #1f1f1f; flex: none; }
.corner { background: #262626; position: relative; }
.corner::before { content: ""; position: absolute; left: 0; top: 0; border-top: 14px solid #1b6fe0; border-right: 10px solid transparent; }
.ruler-top {
  display: flex; background: #2a2a2a; color: #7c7c7c; font-size: 17px; margin-left: -25px; border-bottom: 2px solid #3d3d3d;
  background-image: repeating-linear-gradient(90deg, #555 0 1px, transparent 1px 33.5px);
  background-size: 100% 7px; background-repeat: no-repeat; background-position: 6px bottom;
}
.ruler-top span { flex: 0 0 167.5px; text-align: center; line-height: 20px; }
.ruler-left { position: relative; background: #2a2a2a; color: #7c7c7c; font-size: 17px; line-height: 18.5px; border-right: 2px solid #3d3d3d;
  background-image: repeating-linear-gradient(180deg, #555 0 1px, transparent 1px 33.5px);
  background-size: 7px 100%; background-repeat: no-repeat; background-position: right 5px;
}
.ruler-left span { display: block; text-align: center; width: 20px; position: absolute; left: 0; }
.rl-100 { top: 96px; }
.rl-50 { top: 264px; }
.rl-0 { top: 448px; }
.canvas {
  position: relative; overflow: hidden; background-color: #262626;
  background-image:
    linear-gradient(#000, #000), linear-gradient(#000, #000),
    linear-gradient(90deg, #141414 0 1px, transparent 1px), linear-gradient(#141414 0 1px, transparent 1px),
    linear-gradient(90deg, #343434 0 1px, transparent 1px), linear-gradient(#343434 0 1px, transparent 1px);
  background-size: 2px 100%, 100% 2px, 267px 267px, 267px 267px, 33.4px 33.4px, 33.4px 33.4px;
  background-position: 391px 0, 0 458px, 124px 0, 0 191px, 24px 0, 0 24px;
  background-repeat: no-repeat, no-repeat, repeat, repeat, repeat, repeat;
}
.outline-h { position: absolute; left: 17px; top: 16px; right: 0; height: 12px; background: #0c38a4; }
.outline-v { position: absolute; left: 17px; top: 16px; bottom: 0; width: 11px; background: #0c38a4; }
.selected { position: absolute; left: 40px; top: 38px; font: 700 106px/1.1 Roboto, sans-serif; color: #0a45ec; white-space: nowrap; transform: scaleX(.868); transform-origin: left top; }
.dash { position: absolute; left: 391px; top: 458px; width: 317px; height: 200px; border: 1px dashed #bbb; border-bottom: 0; }
.redbox { position: absolute; left: 471px; top: 377px; width: 366px; height: 254px; border: 3px solid #e81c23; }
.nines { position: absolute; left: 544px; top: 368px; font: 700 285px/1 "Liberation Serif", serif; letter-spacing: -7.5px; color: #fafafa; -webkit-text-stroke: 9px #000; paint-order: stroke fill; white-space: nowrap; }
.cv-bar { position: absolute; left: 12px; top: 4px; display: flex; align-items: center; height: 41px; white-space: nowrap; }
.zoom-txt { width: 124px; font: 700 29px Roboto, sans-serif; color: #66707f; flex: none; }
.pill { display: flex; align-items: center; height: 41px; border-radius: 20px; background: #333; border: 1px solid #222; color: #bdbdbd; margin-right: 14px; overflow: hidden; flex: none; }
.pill-none { width: 106px; padding-left: 7px; gap: 6px; }
.globe { width: 26px; height: 26px; }
.pill-div { width: 2px; height: 41px; background: #242424; }
.pill-select { width: 78px; }
.pill-r { width: 79px; }
.pill-grid { width: 68px; margin-right: 3px; }
.blue-seg { display: flex; align-items: center; justify-content: center; height: 100%; background: #0a62c4; }
.seg-wide { width: 39px; border-right: 1px solid #13345e; }
.seg-lock { width: 39px; }
.sq { width: 24px; height: 24px; }
.pill-lbl { flex: 1; text-align: center; font-weight: 500; font-size: 22px; }
.pill-ic { width: 34px; justify-content: center; margin-right: 3px; background: #2c2c2c; }
.pill-dim { background: #292929; }
.pill-size { width: 160px; margin-left: 3px; padding-left: 7px; margin-right: 9px; }
.pill-custom { width: 120px; padding-left: 7px; margin-right: 8px; }
.width-box { width: 110px; height: 41px; background: #0e0e0e; border-radius: 8px; margin-left: 80px; }

.right-col { margin-left: 7px; width: 268px; flex: none; }
.details-tab { width: 268px; height: 42px; padding-left: 10px; }
.details-body { height: 590px; }

/* animation drawer */
.drawer { position: absolute; left: 22px; right: 20px; top: 638px; bottom: 0; display: flex; background: #181818; border-top: 2px solid #343434; border-left: 2px solid #2a2a2a; border-right: 2px solid #2a2a2a; border-bottom: 2px solid #2e2e2e; border-radius: 8px; padding-left: 11px; }
.anim-list { width: 372px; flex: none; }
.anim-top { height: 45px; display: flex; align-items: center; margin-top: 2px; padding-left: 5px; gap: 7px; }
.ue-btn { display: flex; align-items: center; justify-content: center; background: #333; color: #d2d2d2; border-radius: 5px; box-shadow: 0 0 0 1px #222; gap: 6px; }
.btn-anim { width: 186px; height: 34px; }
.plus { width: 24px; height: 26px; color: #7cc552; }
.search-a { width: 165px; height: 34px; padding-left: 6px; }
.search-a span, .search-t span { overflow: hidden; color: #444; }
.search-a span { width: 88px; white-space: nowrap; }
.anim-row { height: 34px; background: #425a76; color: #e6e6e6; padding-left: 6px; line-height: 34px; }

.seq { width: 2110px; flex: none; margin-left: 8px; display: flex; flex-direction: column; }
.seq-bar { height: 62px; background: #242424; display: flex; align-items: center; flex: none; position: relative; padding-left: 19px; }
.seq-bar .chev { margin-left: 6px; }
.ic-wrench { width: 34px; height: 44px; }
.ic-eye { width: 34px; height: 24px; margin-left: 35px; }
.ic-gear { width: 34px; height: 40px; margin-left: 32px; }
.seq-sep { width: 2px; height: 50px; background: #1a1a1a; margin-left: 25px; }
.ic-dia { width: 32px; height: 46px; margin-left: 19px; }
.ic-key { width: 32px; height: 46px; margin-left: 35px; }
.magnet { width: 60px; height: 48px; margin-left: 20px; background: #0a72e6; border-radius: 4px 0 0 4px; display: flex; align-items: center; justify-content: center; }
.magnet svg { width: 30px; height: 34px; }
.magnet-more { width: 24px; height: 48px; background: #333; border-radius: 0 4px 4px 0; display: flex; align-items: center; justify-content: center; }
.magnet-more .dots { height: 30px; width: 7px; }
.fps { margin-left: 24px; color: #b4b4b4; }
.seq-bar .fps + .chev { margin-left: 20px; }
.ic-curve { width: 32px; height: 32px; margin-left: 60px; }
.dock-layout { position: absolute; right: 0; top: 0; height: 62px; display: flex; align-items: center; gap: 14px; color: #a0a0a0; }
.ic-dock { width: 26px; height: 26px; }
.ic-lock { width: 24px; height: 26px; margin-left: 14px; }

.seq-main { display: flex; flex: 1; min-height: 0; }
.tree-col { width: 641px; flex: none; display: flex; flex-direction: column; }
.track-bar { height: 52px; background: #242424; display: flex; align-items: center; padding: 0 0 2px 12px; color: #d0d0d0; flex: none; }
.btn-track { width: 133px; height: 40px; }
.search-t { width: 252px; height: 38px; margin-left: 8px; padding-left: 6px; }
.search-t span { white-space: nowrap; }
.ic-filter { width: 22px; height: 30px; margin-left: 10px; }
.orange { color: #bd8a36; }
.val1 { margin-left: 25px; }
.val2 { margin-left: 40px; }
.tree { background: #3c3c3c; width: 635px; height: 349px; position: relative; flex: none; color: #a4a4a4; }
.trow { display: grid; grid-template-columns: 395px 130px 1fr; align-items: center; }
.h43 { height: 43px; }
.h37 { height: 37px; }
.h31 { height: 31px; }
.h27 { height: 27px; }
.h25 { height: 25px; }
.h29 { height: 29px; }
.tn { display: flex; align-items: center; white-space: nowrap; }
.it { font-style: italic; font-size: 23px; }
.l0 { padding-left: 9px; }
.l1 { padding-left: 57px; }
.l1x { padding-left: 25px; }
.l2 { padding-left: 43px; }
.l3 { padding-left: 90px; }
.cd { width: 16px; height: 12px; color: #888; margin-right: 17px; }
.l0 .cd { margin-right: 10px; }
.l1x .cd { margin-right: 17px; }
.cr { width: 12px; height: 16px; color: #888; margin: 0 20px 0 2px; }
.t-ico { width: 23px; height: 33px; border: 2px solid #a8a8a8; text-align: center; line-height: 28px; font-size: 20px; font-weight: 700; margin-right: 9px; color: #bbb; }
.name-sm { font-size: 20px; }
.name-md { font-size: 20.5px; }
.tval { font-size: 20px; color: #8c8c8c; white-space: nowrap; line-height: 22px; }
.tval2 { padding-left: 9px; }
.ta { display: flex; align-items: center; justify-content: flex-end; padding-right: 5px; gap: 22px; }
.pad14 { padding-right: 14px; }
.bplus { width: 20px; height: 20px; color: #c4c4c4; }
.bp-top { margin-right: 10px; }
.ka { width: 54px; height: 16px; color: #7c7c7c; }
.teal-mark { position: absolute; right: 2px; top: 86px; width: 9px; height: 37px; background: #3e8296; }
.tree-foot { flex: 1; background: #1c1c1c; position: relative; padding: 24px 0 0 8px; }
.tree-foot::after { content: ""; position: absolute; left: 0; right: 0; bottom: 0; height: 58px; background: #232323; }
.items { display: block; width: 100px; height: 36px; line-height: 36px; background: #242424; padding-left: 5px; font-size: 21px; color: #c0c0c0; position: relative; z-index: 1; }
.transport { position: absolute; left: 114px; bottom: 4px; width: 430px; height: 50px; z-index: 1; }

.timeline { width: 1469px; flex: none; position: relative; background-color: #181818;
  background-image: linear-gradient(90deg, #202020 0 1px, transparent 1px);
  background-size: 122.6px 100%;
}
.tl-ruler { height: 52px; display: flex; background-color: #111; color: #5c5c5c; font-size: 18px; position: relative; padding-top: 29px; line-height: 20px;
  background-image: linear-gradient(90deg, #8a8a8a 0 2px, transparent 2px), linear-gradient(90deg, #8a8a8a 0 2px, transparent 2px);
  background-size: 122.6px 14px, 122.6px 10px; background-position: 0 bottom, 61.3px bottom; background-repeat: repeat-x;
}
.tl-ruler span { flex: 0 0 122.6px; padding-left: 8px; }
.tl-tracks { height: 349px; }
.clip-row { position: relative; padding-left: 122px; display: flex; align-items: center; }
.clip { width: 242px; }
.clip-purple { height: 33px; background: #65636e; margin-top: -4px; }
.clip-grey { height: 36px; background: #4a4a4a; border-radius: 5px; margin-top: -2px; background-image: linear-gradient(#181818,#181818); background-size: 100% 2px; background-position: 0 50%; background-repeat: no-repeat; }
.clip-teal { height: 37px; background: #458896; border-radius: 4px 4px 0 0; }
.teal-block { margin-left: 122px; width: 242px; height: 226px; background: #232c2e; overflow: hidden; border-radius: 0 0 6px 6px; }
.kr { position: relative; }
.kr.line::before { content: ""; position: absolute; left: 0; right: 0; top: 50%; height: 2px; margin-top: -1px; background: #4a97a6; }
.key { position: absolute; top: 50%; width: 15px; height: 15px; margin: -7.5px 0 0 -7.5px; border-radius: 50%; background: #f27c7c; box-shadow: 0 0 0 4px #232c2e; }
.key-out { background: #c96a62; box-shadow: none; width: 14px; height: 14px; margin: -7px 0 0 -7px; }
.key-l { left: 122px; }
.key-r { left: 365px; }
.tl-ruler-b { position: absolute; left: 0; right: 0; top: 463px; bottom: 0; height: auto; background-color: #131313; background-position: 0 top, 61.3px top; padding-top: 3px; color: #474747; }
.range { position: absolute; top: 0; bottom: 0; width: 2px; }
.range-start { left: 122px; background: #1f7a2c; }
.range-end { left: 364px; background: #7a2025; }
.range-start::before { content: ""; position: absolute; left: 0; top: 0; border-top: 10px solid #1f7a2c; border-right: 9px solid transparent; }
.range-start::after { content: ""; position: absolute; left: 0; bottom: 0; border-bottom: 10px solid #1f7a2c; border-right: 9px solid transparent; }
.range-end::before { content: ""; position: absolute; right: 0; top: 0; border-top: 10px solid #7a2025; border-left: 9px solid transparent; }
.range-end::after { content: ""; position: absolute; right: 0; bottom: 0; border-bottom: 10px solid #7a2025; border-left: 9px solid transparent; }
.playline { position: absolute; left: 144px; top: 48px; height: 400px; width: 2px; background: #b6c2c6; }
.head-top, .head-bot { position: absolute; left: 135px; width: 22px; background: #a0522d; opacity: .86; }
.head-top { top: 2px; height: 50px; border-radius: 3px 3px 11px 11px; }
.head-bot { bottom: 2px; height: 50px; border-radius: 11px 11px 3px 3px; }
.head-lbl { position: absolute; left: 161px; color: #c4c4c4; font-size: 23px; line-height: 26px; }
.lbl-top { top: 0; }
.lbl-bot { bottom: 1px; }

/* status bar */
.status { height: 51px; background: #242424; display: flex; align-items: center; flex: none; color: #9a9a9a; position: relative; padding-top: 3px; }
.st { display: flex; align-items: center; height: 48px; gap: 7px; border-right: 2px solid #1c1c1c; flex: none; }
.st1 { width: 232px; padding-left: 18px; }
.st2 { width: 187px; padding-left: 18px; }
.st3 { width: 186px; padding-left: 21px; }
.st4 { width: 142px; padding-left: 25px; border: 0; }
.st-ico { width: 25px; height: 36px; }
.console { width: 440px; height: 37px; margin-left: 15px; background: #101010; border: 1px solid #2b2b2b; border-radius: 6px; padding-left: 14px; font: 20.2px/33px "Liberation Mono", monospace; color: #444; white-space: nowrap; }
.st-r1 { margin-left: auto; width: 178px; padding-left: 20px; border-left: 2px solid #1c1c1c; gap: 10px; }
.st-r2 { padding: 0 20px 0 16px; gap: 14px; border: 0; font-size: 24px; }

/* player */
.player { height: 81px; background: #000; flex: none; }
.seekline { height: 3px; background: linear-gradient(90deg, #9a9a9a 0 80px, #e8e8e8 80px 556px, #8e8e8e 556px 1884px, #d8d8d8 1884px 1968px, #9a9a9a 1968px); }
.player-row { height: 52px; display: flex; align-items: center; position: relative; }
.p-prev { width: 23px; height: 26px; margin-left: 47px; }
.p-play { width: 30px; height: 42px; margin-left: 54px; }
.p-next { width: 23px; height: 26px; margin-left: 57px; }
.p-time { margin-left: 53px; width: 236px; font-size: 21px; color: #d8d8d8; white-space: nowrap; letter-spacing: -0.2px; }
.p-dm1, .p-dm2 { width: 32px; height: 40px; }
.p-dm1 { margin-left: 74px; }
.p-dm2 { margin-left: 32px; }
.dm-glyph { font: 400 15px "Noto Sans CJK SC", sans-serif; color: #ddd; width: 32px; margin-left: -32px; text-align: center; margin-top: -2px; }
.dm-input { width: 966px; height: 58px; margin: -3px 0 0 42px; align-self: flex-start; background: #505150; border-radius: 12px; display: flex; align-items: center; padding-left: 15px; font-family: "Noto Sans CJK SC", sans-serif; overflow: hidden; flex: none; }
.dm-a { width: 23px; color: #ddd; font-size: 26px; line-height: 30px; border-bottom: 3px solid #ddd; text-align: center; font-family: Roboto, sans-serif; }
.dm-ph { margin-left: 14px; font-size: 20.5px; color: #aeaeae; }
.dm-rule { margin-left: auto; font-size: 20px; color: #a8a8a8; margin-right: 13px; white-space: nowrap; }
.dm-rule b { font-weight: 400; }
.dm-send { width: 95px; height: 58px; background: #54a9e6; color: #fff; font-size: 20px; }
.p-txt { font: 500 24px "Noto Sans CJK SC", sans-serif; color: #dcdcdc; white-space: nowrap; }
.q { margin-left: 118px; }
.ep { margin-left: 31px; }
.sp { margin-left: 43px; font-family: Roboto, sans-serif; }
.cc { margin-left: 44px; width: 45px; height: 46px; background: #e6e6e6; color: #111; font: 500 20px/42px "Noto Sans CJK SC", sans-serif; text-align: center; border-radius: 3px; white-space: nowrap; overflow: hidden; letter-spacing: -2px; }
.p-vol { width: 32px; height: 42px; margin-left: 44px; }
.p-gear { width: 36px; height: 44px; margin-left: 46px; }
.p-pip { width: 36px; height: 40px; margin-left: 44px; }
.p-rad { width: 38px; height: 48px; margin-left: 45px; }

/* calculator window */
.calc { position: absolute; left: 1492px; top: 301px; width: 674px; height: 1042px; background: #f3f3f3; border: 1px solid #4a4a4a; font-family: "Open Sans", "Noto Sans", sans-serif; color: #1a1a1a; display: flex; flex-direction: column; }
.calc-title { height: 54px; flex: none; display: flex; align-items: center; padding-left: 33px; }
.calc-ico { width: 20px; height: 26px; }
.calc-name { margin-left: 26px; font-size: 19px; color: #444; }
.calc-ctl { margin-left: auto; display: flex; align-items: center; gap: 58px; padding-right: 29px; }
.calc-ctl svg { width: 17px; height: 17px; }
.calc-head { height: 76px; flex: none; display: flex; align-items: center; padding-left: 27px; }
.burger { width: 25px; height: 17px; }
.calc-mode { margin-left: 26px; font-size: 32px; font-weight: 600; color: #1c1c1c; letter-spacing: -0.6px; }
.keeptop { width: 25px; height: 25px; margin-left: 31px; }
.history { width: 27px; height: 27px; margin-left: auto; margin-right: 25px; }
.calc-expr { height: 35px; margin-top: 18px; flex: none; text-align: right; padding-right: 29px; font-size: 23px; line-height: 35px; color: #777; letter-spacing: -0.5px; }
.calc-val { height: 80px; flex: none; font-size: 61.5px; font-weight: 600; color: #000; line-height: 80px; padding-left: 33px; white-space: nowrap; letter-spacing: .2px; }
.calc-mem { height: 60px; margin-top: 69px; flex: none; display: grid; grid-template-columns: repeat(6, 111px); padding-left: 3px; font-size: 20px; align-items: center; justify-items: center; color: #333; }
.calc-mem .off { color: #a8a8a8; }
.mv { display: flex; align-items: center; }
.mchev { width: 13px; height: 8px; color: #a8a8a8; }
.keypad { margin: 9px 0 0 8px; width: 658px; display: grid; grid-template-columns: repeat(4, 160px); grid-auto-rows: 100px; column-gap: 6px; row-gap: 6.8px; }
.keypad button { background: #fff; color: #262626; font-family: "Open Sans", sans-serif; font-size: 28px; border-radius: 6px; box-shadow: 0 1.5px 1px #d5d5d5, 0 0 0 1px #ececec; position: relative; display: flex; align-items: center; justify-content: center; }
.keypad .fn { background: #f9f9f9; color: #333; }
.keypad .sm { font-size: 25px; }
.keypad .op { font-size: 34px; font-weight: 300; }
.keypad .ser { font: 29px "Liberation Serif", serif; }
.keypad .ser-s { font-size: 25px; }
.keypad sup, .keypad sub { font-size: 65%; line-height: 1; }
.keypad .ol { border-top: 1px solid #333; line-height: 26px; }
.keypad .hov { background: #fbfbfb; }
.keypad .eq { background: #005a9e; color: #bfe0fb; font-size: 38px; box-shadow: none; margin: -1px; height: 102px; width: 162px; }
.bksp { width: 26px; height: 18px; }
.cursor { position: absolute; left: 45px; top: 28px; width: 18px; height: 26px; }

/* overlays on the video */
.subtitle { position: absolute; left: 958px; top: 1360px; width: 661px; height: 88px; padding-left: 10px; background: rgba(0,0,0,.32); color: #fff; font: 400 62.5px/86px "Noto Sans CJK SC", sans-serif; white-space: nowrap; }
.wm-name { position: absolute; left: 2060px; top: 148px; font: 500 51px/64px "Noto Sans", sans-serif; color: rgba(214,214,214,.88); white-space: nowrap; }
.wm-bili { position: absolute; left: 2328px; top: 118px; font: 700 78px/80px Lato, sans-serif; color: rgba(212,212,212,.85); letter-spacing: -2px; white-space: nowrap; transform: scaleY(1.25); }
.wm-udemy { position: absolute; left: 2458px; top: 1475px; font-size: 24px; color: rgba(190,190,190,.7); }
.progress { position: absolute; left: 18px; top: 1487px; width: 2392px; height: 4px; display: flex; }
.prog-fill { width: 2135px; background: #54a9e6; }
.prog-buf { flex: 1; background: rgba(150,150,150,.7); }
.bili-tv { position: absolute; left: 2422px; top: 1354px; width: 80px; height: 78px; }
```
